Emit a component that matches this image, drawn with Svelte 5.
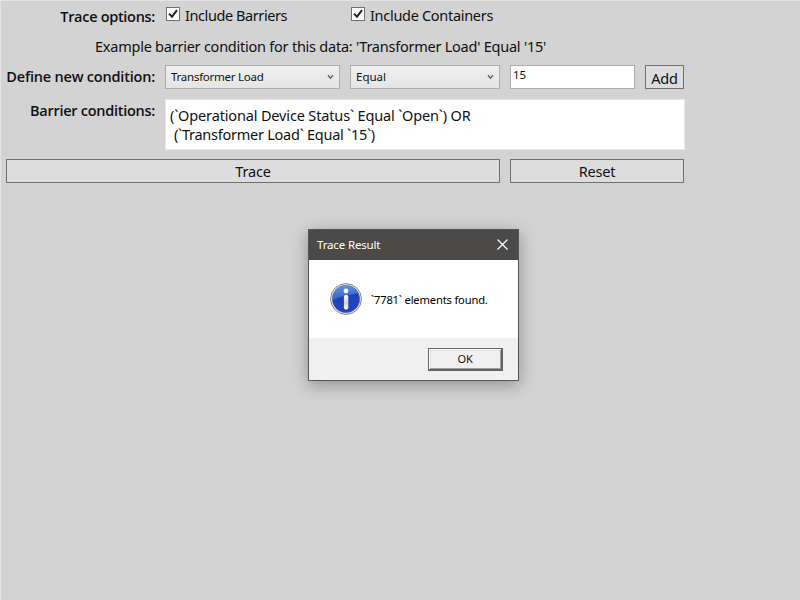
<script>
  const options = ['Include Barriers', 'Include Containers'];
</script>

<main>
  <form onsubmit={(e) => e.preventDefault()}>
    <div class="row options">
      <b class="label t-options">Trace options:</b>
      {#each options as option, i}
        <label class="check">
          <span class="box">
            <svg viewBox="0 0 14 14" width="14" height="14"><path d="M3 6.6 6 9.7 11 3.2" fill="none" stroke="#212121" stroke-width="2" /></svg>
          </span>
          <span class={i ? 't-containers' : 't-barriers'}>{option}</span>
        </label>
      {/each}
    </div>

    <div class="example"><span class="t-example">Example barrier condition for this data: 'Transformer Load' Equal '15'</span></div>

    <div class="row define">
      <b class="label t-define">Define new condition:</b>
      <div class="combo attribute">
        <span class="t-attr">Transformer Load</span>
        <svg viewBox="0 0 7 6" width="7" height="6"><path d="M1 1.2 3.5 4.2 6 1.2" fill="none" stroke="#606060" stroke-width="1.4" /></svg>
      </div>
      <div class="combo comparison">
        <span class="t-equal">Equal</span>
        <svg viewBox="0 0 7 6" width="7" height="6"><path d="M1 1.2 3.5 4.2 6 1.2" fill="none" stroke="#606060" stroke-width="1.4" /></svg>
      </div>
      <div class="value"><span>15</span></div>
      <button class="add"><span>Add</span></button>
    </div>

    <div class="row conditions">
      <b class="label t-conditions">Barrier conditions:</b>
      <div class="list">
        <div><span class="t-first">(`Operational Device Status` Equal `Open`) OR</span></div>
        <div><span class="t-second">(`Transformer Load` Equal `15`)</span></div>
      </div>
    </div>

    <div class="row actions">
      <button class="trace"><span>Trace</span></button>
      <button class="reset"><span>Reset</span></button>
    </div>
  </form>

  <section class="dialog" role="dialog" aria-label="Trace Result">
    <header>
      <span class="t-title">Trace Result</span>
      <svg viewBox="0 0 11 11" width="11" height="11"><path d="M.5.5 10.5 10.5M10.5.5.5 10.5" stroke="#fff" stroke-width="1.2" /></svg>
    </header>
    <div class="message">
      <svg viewBox="0 0 32 32" width="32" height="32">
        <defs>
          <linearGradient id="ball" x1="0" y1="0" x2="0.3" y2="1">
            <stop offset="0" stop-color="#4a7ad8" />
            <stop offset="0.5" stop-color="#1d43b4" />
            <stop offset="1" stop-color="#2440cc" />
          </linearGradient>
          <linearGradient id="gloss" x1="0" y1="0" x2="0" y2="1">
            <stop offset="0" stop-color="#7aa4ec" stop-opacity="0.6" />
            <stop offset="1" stop-color="#4f7ddc" stop-opacity="0.5" />
          </linearGradient>
          <linearGradient id="stem" x1="0" y1="0" x2="0" y2="1">
            <stop offset="0" stop-color="#fff" />
            <stop offset="0.55" stop-color="#ccd0dc" />
            <stop offset="1" stop-color="#fff" />
          </linearGradient>
        </defs>
        <circle cx="16" cy="16" r="15.4" fill="#f4f4f4" stroke="#858585" stroke-width="1" />
        <circle cx="16" cy="16" r="13.8" fill="url(#ball)" stroke="#6575a0" stroke-width=".6" />
        <path d="M2.5 17A13.5 13.5 0 0 1 28 10Q22 11.5 16 12.5 7 14 2.5 18Z" fill="url(#gloss)" />
        <circle cx="16" cy="8" r="2.4" fill="#fff" />
        <rect x="13.9" y="12" width="4.4" height="14.5" rx="1.8" fill="url(#stem)" />
      </svg>
      <span class="t-found">`7781` elements found.</span>
    </div>
    <footer><button class="ok"><span>OK</span></button></footer>
  </section>
</main>

<style>
  main {
    position: relative;
    box-sizing: border-box;
    width: 800px;
    height: 600px;
    overflow: hidden;
    background: #d3d3d3;
    border-left: 1px solid #e4e4e4;
    border-top: 1px solid #e4e4e4;
    font: 14.5px/20px "Noto Sans", "Open Sans", sans-serif;
    color: #111;
  }
  span, b { white-space: pre; }
  form {
    display: flex;
    flex-direction: column;
    width: 684px;
    padding-top: 4px;
  }
  .row { display: flex; }
  .label {
    width: 154px;
    margin-right: 10px;
    text-align: right;
    font-weight: 600;
    font-family: "Open Sans", sans-serif;
    flex: none;
  }
  .t-options { letter-spacing: -0.3px; }
  .t-define { letter-spacing: -0.2px; }
  .t-conditions { letter-spacing: -0.27px; }
  .t-barriers { letter-spacing: -0.42px; }
  .t-containers { letter-spacing: -0.3px; }
  .t-example { letter-spacing: -0.24px; }
  .t-first { letter-spacing: -0.15px; }
  .t-second { letter-spacing: -0.25px; }
  .t-attr { letter-spacing: -0.25px; }
  .t-title { letter-spacing: -0.15px; }
  .options { height: 30px; }
  .options .label { padding-top: 2px; }
  .check { display: flex; width: 185px; gap: 5px; }
  .box {
    box-sizing: border-box;
    width: 14px;
    height: 14px;
    margin: 2px 0 0 1px;
    background: #fff;
    border: 1px solid #707070;
    flex: none;
  }
  .box svg { display: block; margin: -1px; }
  .example { height: 30px; padding-left: 94px; padding-top: 1px; box-sizing: border-box; }
  .define { height: 34px; }
  .define .label { padding-top: 2px; }
  .combo, .value, button { box-sizing: border-box; height: 24px; }
  .combo {
    display: flex;
    align-items: center;
    justify-content: space-between;
    padding: 0 5px;
    margin-right: 10px;
    border: 1px solid #acacac;
    background: linear-gradient(#f0f0f0, #e5e5e5);
    font-size: 11.5px;
  }
  .attribute { width: 175px; }
  .comparison { width: 150px; }
  .value {
    width: 125px;
    margin-right: 10px;
    padding-left: 2px;
    border: 1px solid #abadb3;
    background: #fff;
    font-size: 11.5px;
    line-height: 18px;
  }
  button {
    padding: 0;
    border: 1px solid #707070;
    border-radius: 0;
    background: #ddd;
    color: #111;
    font: inherit;
    line-height: 22px;
    letter-spacing: -0.2px;
  }
  .add { width: 39px; line-height: 25px; }
  .conditions { height: 60px; }
  .conditions .label { padding-top: 2px; }
  .list {
    box-sizing: border-box;
    flex: 1;
    height: 51px;
    padding: 6px 5px 0 4px;
    border: 1px solid #e8e8e8;
    background: #fff;
    line-height: 19px;
  }
  .list div + div { padding-left: 4px; }
  .actions { padding-left: 5px; gap: 10px; }
  .trace { width: 494px; }
  .reset { width: 174px; }

  .dialog {
    position: absolute;
    left: 307px;
    top: 228px;
    box-sizing: border-box;
    width: 211px;
    height: 152px;
    border: 1px solid #555;
    background: #fff;
    box-shadow: 0 4px 16px rgba(0, 0, 0, 0.32);
    font-size: 11.5px;
  }
  header {
    display: flex;
    align-items: center;
    justify-content: space-between;
    height: 30px;
    box-sizing: border-box;
    padding: 0 10px 0 8px;
    background: #4b4a48;
    color: #fff;
  }
  header svg { margin-bottom: 2px; }
  .message {
    display: flex;
    align-items: center;
    gap: 9px;
    height: 78px;
    padding-left: 21px;
    color: #000;
  }
  .t-found { padding-top: 2px; font-size: 11.2px; letter-spacing: -0.18px; }
  footer {
    display: flex;
    justify-content: flex-end;
    box-sizing: border-box;
    height: 42px;
    padding: 10px 15px 0 0;
    background: #f0f0f0;
  }
  .ok {
    width: 75px;
    height: 23px;
    border: 1px solid #646464;
    border-right-width: 2px;
    border-bottom-width: 2px;
    background: #f0f0f0;
    box-shadow: inset 1px 1px #fff, inset -1px -1px #a0a0a0, inset 2px 2px #e3e3e3;
    line-height: 20px;
    font-size: 11px;
  }
</style>
